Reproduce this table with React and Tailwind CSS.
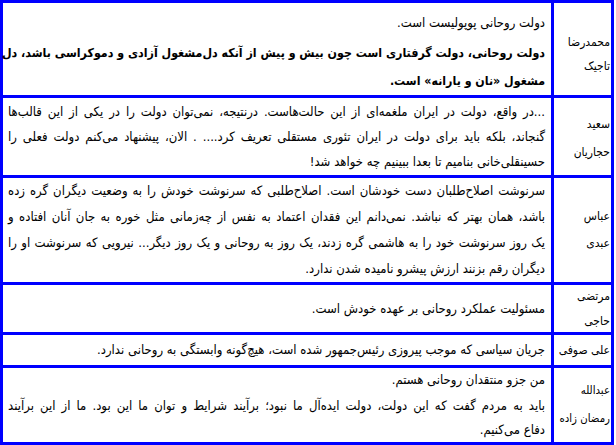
import React from "react";

const rows = [
  {
    h: "h-[92px]",
    lead: "leading-[28px]",
    align: "justify-end",
    namePad: "pt-[10px] leading-[24px] text-[12px]",
    name: ["محمدرضا", "تاجیک"],
    paras: [
      { lines: ["دولت روحانی پوپولیست است."] },
      {
        bold: true,
        lines: [
          "دولت روحانی، دولت گرفتاری است چون بیش و پیش از آنکه دل‌مشغول آزادی و دموکراسی باشد، دل",
          "مشغول «نان و یارانه» است.",
        ],
      },
    ],
  },
  {
    h: "h-[80px]",
    lead: "leading-[25px]",
    align: "justify-center",
    namePad: "pt-[3px] leading-[28px] text-[12px]",
    name: ["سعید", "حجاریان"],
    paras: [
      {
        lines: [
          "...در واقع، دولت در ایران ملغمه‌ای از این حالت‌هاست. درنتیجه، نمی‌توان دولت را در یکی از این قالب‌ها",
          "گنجاند، بلکه باید برای دولت در ایران تئوری مستقلی تعریف کرد.... . الان، پیشنهاد می‌کنم دولت فعلی را",
          "حسینقلی‌خانی بنامیم تا بعدا ببینیم چه خواهد شد!",
        ],
      },
    ],
  },
  {
    h: "h-[107px]",
    lead: "leading-[26px]",
    align: "justify-center",
    namePad: "leading-[27px] text-[12px]",
    name: ["عباس", "عبدی"],
    paras: [
      {
        lines: [
          "سرنوشت اصلاح‌طلبان دست خودشان است. اصلاح‌طلبی که سرنوشت خودش را به وضعیت دیگران گره زده",
          "باشد، همان بهتر که نباشد. نمی‌دانم این فقدان اعتماد به نفس از چه‌زمانی مثل خوره به جان آنان افتاده و",
          "یک روز سرنوشت خود را به هاشمی گره زدند، یک روز به روحانی و یک روز دیگر... نیرویی که سرنوشت او را",
          "دیگران رقم بزنند ارزش پیشرو نامیده شدن ندارد.",
        ],
      },
    ],
  },
  {
    h: "h-[50px]",
    lead: "leading-[26px]",
    align: "justify-center",
    namePad: "leading-[25px] text-[12px]",
    name: ["مرتضی", "حاجی"],
    paras: [{ lines: ["مسئولیت عملکرد روحانی بر عهده خودش است."] }],
  },
  {
    h: "h-[33px]",
    lead: "leading-[26px]",
    align: "justify-center",
    namePad: "leading-[26px] text-[12px]",
    name: ["علی صوفی"],
    paras: [
      {
        lines: [
          "جریان سیاسی که موجب پیروزی رئیس‌جمهور شده است، هیچ‌گونه وابستگی به روحانی ندارد.",
        ],
      },
    ],
  },
  {
    h: "h-[77px]",
    lead: "leading-[24px]",
    align: "justify-center",
    namePad: "leading-[28px] text-[11.3px]",
    name: ["عبدالله", "رمضان زاده"],
    paras: [
      { lines: ["من جزو منتقدان روحانی هستم."] },
      {
        lines: [
          "باید به مردم گفت که این دولت، دولت ایده‌آل ما نبود؛ برآیند شرایط و توان ما این بود. ما از این برآیند",
          "دفاع می‌کنیم.",
        ],
      },
    ],
  },
];

const App = () => {
  return (
    <div className="bg-white w-[616px] h-[445px]">
      <div
        dir="rtl"
        className="w-[614px] border-[3px] border-[#0000ff] text-black text-[13px] [font-stretch:condensed] font-['DejaVu_Sans_Condensed','DejaVu_Sans',sans-serif]"
      >
        {rows.map((row, i) => (
          <div
            key={i}
            className={`flex ${row.h} ${i > 0 ? "border-t-[3px] border-[#0000ff]" : ""}`}
          >
            {/* name */}
            <div
              className={`w-[57px] shrink-0 flex flex-col justify-center pr-[1px] whitespace-nowrap ${row.namePad}`}
            >
              {row.name.map((n, j) => (
                <div key={j}>{n}</div>
              ))}
            </div>
            {/* text */}
            <div
              className={`flex-1 min-w-0 border-r-[3px] border-[#0000ff] flex flex-col ${row.align} gap-[2px] pr-[6px] pl-[5px] ${row.lead}`}
            >
              {row.paras.map((p, j) => (
                <div key={j} className={p.bold ? "font-bold text-[12.3px]" : ""}>
                  {p.lines.map((l, k) => (
                    <div
                      key={k}
                      className={
                        k < p.lines.length - 1
                          ? "whitespace-nowrap text-justify [text-align-last:justify]"
                          : "whitespace-nowrap"
                      }
                    >
                      {l}
                    </div>
                  ))}
                </div>
              ))}
            </div>
          </div>
        ))}
      </div>
    </div>
  );
};

export default App;
